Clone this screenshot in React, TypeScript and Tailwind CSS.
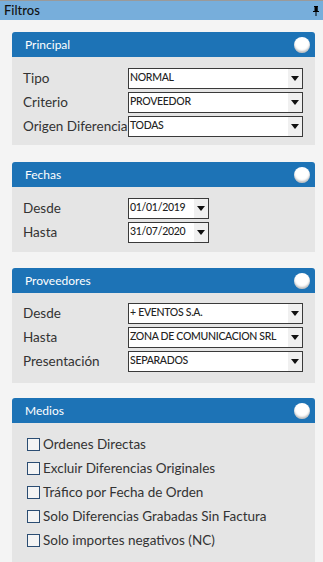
import React from "react";

const font = { fontFamily: 'Lato, "Open Sans", sans-serif' };
const selFont = { fontFamily: 'Lato, "Liberation Sans", sans-serif' };

function Select({ value, width }: { value: string; width: string }) {
  return (
    <div className={`flex h-[21px] ${width} items-stretch border border-[#3a3a3a] bg-white`}>
      <div className="flex flex-1 items-center overflow-hidden whitespace-nowrap pl-[1px] text-[10.5px] font-medium tracking-[-0.3px] text-[#222]" style={selFont}>
        {value}
      </div>
      <div className="flex w-[14px] items-center justify-center bg-[#f0f0f0]">
        <svg width="8" height="5" viewBox="0 0 8 5">
          <path d="M0 0H8L4 5Z" fill="#111" />
        </svg>
      </div>
    </div>
  );
}

function Panel({ title, children, bodyClass }: { title: string; children: React.ReactNode; bodyClass: string }) {
  return (
    <div className="mx-[12px] w-[303px]">
      <div className="flex h-[25px] items-center justify-between rounded-t-[3px] bg-[#1d73b6] pl-[13px] pr-[5px]">
        <span className="text-[12px] text-white" style={font}>{title}</span>
        <div className="h-[16px] w-[16px] rounded-full bg-white shadow-[inset_0_-2px_2px_rgba(0,0,0,0.25)]" />
      </div>
      <div className={`bg-[#e5e5e5] ${bodyClass}`}>{children}</div>
    </div>
  );
}

function Row({ label, children }: { label: string; children: React.ReactNode }) {
  return (
    <div className="flex h-[24px] items-center">
      <div className="w-[116px] whitespace-nowrap pl-[11px] text-[13.5px] text-[#333]" style={font}>{label}</div>
      {children}
    </div>
  );
}

function Check({ label }: { label: string }) {
  return (
    <div className="flex h-[24px] items-center pl-[15px]">
      <div className="h-[13px] w-[13px] border border-[#2b4d73] bg-[#f4f4f4]" />
      <span className="ml-[3px] whitespace-nowrap text-[13.5px] text-[#333]" style={font}>{label}</span>
    </div>
  );
}

export default function App() {
  return (
    <div className="h-[562px] w-[323px] overflow-hidden bg-[#f4f4f4]">
      <div className="flex h-[20px] items-center justify-between border-t border-[#9a9a9a] bg-[#77aedb] pl-[4px] pr-[3px]">
        <span className="text-[13px] font-medium text-[#111]" style={font}>Filtros</span>
        <svg width="8" height="10" viewBox="0 0 8 10">
          <path d="M2 0H6V1H5.5V5H7V6H4.5V10H3.5V6H1V5H2.5V1H2Z" fill="#000" />
          <rect x="4.5" y="1" width="1" height="4" fill="#000" />
        </svg>
      </div>
      <div className="pt-[12px]">
        <Panel title="Principal" bodyClass="pt-[9px] pb-[7px]">
          <Row label="Tipo"><Select value="NORMAL" width="w-[175px]" /></Row>
          <Row label="Criterio"><Select value="PROVEEDOR" width="w-[175px]" /></Row>
          <Row label="Origen Diferencia"><Select value="TODAS" width="w-[175px]" /></Row>
        </Panel>
        <div className="h-[17px]" />
        <Panel title="Fechas" bodyClass="pt-[9px] pb-[8px]">
          <Row label="Desde"><Select value="01/01/2019" width="w-[81px]" /></Row>
          <Row label="Hasta"><Select value="31/07/2020" width="w-[81px]" /></Row>
        </Panel>
        <div className="h-[16px]" />
        <Panel title="Proveedores" bodyClass="pt-[8px] pb-[10px]">
          <Row label="Desde"><Select value="+ EVENTOS S.A." width="w-[175px]" /></Row>
          <Row label="Hasta"><Select value="ZONA DE COMUNICACION SRL" width="w-[175px]" /></Row>
          <Row label="Presentación"><Select value="SEPARADOS" width="w-[175px]" /></Row>
        </Panel>
        <div className="h-[15px]" />
        <Panel title="Medios" bodyClass="pt-[9px] pb-[20px]">
          <Check label="Ordenes Directas" />
          <Check label="Excluir Diferencias Originales" />
          <Check label="Tráfico por Fecha de Orden" />
          <Check label="Solo Diferencias Grabadas Sin Factura" />
          <Check label="Solo importes negativos (NC)" />
        </Panel>
      </div>
    </div>
  );
}
